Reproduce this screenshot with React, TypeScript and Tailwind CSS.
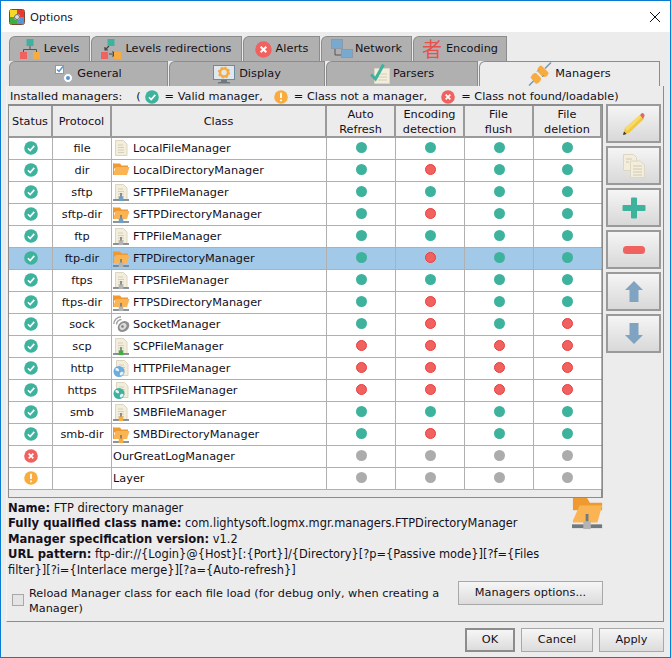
import type { ReactNode } from "react";

const TEAL = "#3db39e";
const RED = "#f0625f";
const ORANGE = "#f8ab3e";

type Dot = "g" | "r" | "n";
type Net = "blue" | "gray" | "green" | "orange";
type ClassIcon =
  | { kind: "file" }
  | { kind: "dir" }
  | { kind: "file-net"; net: Net }
  | { kind: "dir-net"; net: Net }
  | { kind: "sock" }
  | { kind: "globe"; color: string }
  | { kind: "none" };

type Row = {
  status: "ok" | "err" | "warn";
  protocol: string;
  name: string;
  icon: ClassIcon;
  caps: [Dot, Dot, Dot, Dot];
};

const ROWS: Row[] = [
  { status: "ok", protocol: "file", name: "LocalFileManager", icon: { kind: "file" }, caps: ["g", "g", "g", "g"] },
  { status: "ok", protocol: "dir", name: "LocalDirectoryManager", icon: { kind: "dir" }, caps: ["g", "r", "g", "g"] },
  { status: "ok", protocol: "sftp", name: "SFTPFileManager", icon: { kind: "file-net", net: "blue" }, caps: ["g", "g", "g", "g"] },
  { status: "ok", protocol: "sftp-dir", name: "SFTPDirectoryManager", icon: { kind: "dir-net", net: "blue" }, caps: ["g", "r", "g", "g"] },
  { status: "ok", protocol: "ftp", name: "FTPFileManager", icon: { kind: "file-net", net: "gray" }, caps: ["g", "g", "g", "g"] },
  { status: "ok", protocol: "ftp-dir", name: "FTPDirectoryManager", icon: { kind: "dir-net", net: "gray" }, caps: ["g", "r", "g", "g"] },
  { status: "ok", protocol: "ftps", name: "FTPSFileManager", icon: { kind: "file-net", net: "gray" }, caps: ["g", "g", "g", "g"] },
  { status: "ok", protocol: "ftps-dir", name: "FTPSDirectoryManager", icon: { kind: "dir-net", net: "gray" }, caps: ["g", "r", "g", "g"] },
  { status: "ok", protocol: "sock", name: "SocketManager", icon: { kind: "sock" }, caps: ["g", "r", "g", "r"] },
  { status: "ok", protocol: "scp", name: "SCPFileManager", icon: { kind: "file-net", net: "green" }, caps: ["r", "r", "r", "r"] },
  { status: "ok", protocol: "http", name: "HTTPFileManager", icon: { kind: "globe", color: "#6aaee0" }, caps: ["r", "r", "r", "r"] },
  { status: "ok", protocol: "https", name: "HTTPSFileManager", icon: { kind: "globe", color: TEAL }, caps: ["r", "r", "r", "r"] },
  { status: "ok", protocol: "smb", name: "SMBFileManager", icon: { kind: "file-net", net: "orange" }, caps: ["g", "g", "g", "g"] },
  { status: "ok", protocol: "smb-dir", name: "SMBDirectoryManager", icon: { kind: "dir-net", net: "orange" }, caps: ["g", "r", "g", "g"] },
  { status: "err", protocol: "", name: "OurGreatLogManager", icon: { kind: "none" }, caps: ["n", "n", "n", "n"] },
  { status: "warn", protocol: "", name: "Layer", icon: { kind: "none" }, caps: ["n", "n", "n", "n"] },
];

const URL_PATTERN =
  "ftp-dir://{Login}@{Host}[:{Port}]/{Directory}[?p={Passive mode}][?f={Files filter}][?i={Interlace merge}][?a={Auto-refresh}]";

const NET_COLORS: Record<Net, string> = {
  blue: "#6f9fc8",
  gray: "#b4b4b4",
  green: "#3fae3f",
  orange: "#f8ab3e",
};

function StatusIcon({ status, size = 14 }: { status: Row["status"]; size?: number }) {
  const fill = status === "ok" ? TEAL : status === "err" ? RED : ORANGE;
  return (
    <svg width={size} height={size} viewBox="0 0 15 15" className="shrink-0">
      <circle cx="7.5" cy="7.5" r="7.3" fill={fill} />
      {status === "ok" && <path d="M4.2 7.8 6.6 10.2 11 5.2" fill="none" stroke="#fff" strokeWidth="1.7" />}
      {status === "err" && <path d="M5 5l5 5M10 5l-5 5" fill="none" stroke="#fff" strokeWidth="1.8" />}
      {status === "warn" && <path d="M7.5 3v5.6M7.5 10.2v1.9" fill="none" stroke="#fff" strokeWidth="1.9" />}
    </svg>
  );
}

function FilePage() {
  return (
    <>
      <path d="M2.5.5h8l3.5 3.500v11.500h-11.500z" fill="#f3eddc" stroke="#dcd5c0" />
      <path d="M5 5h5M5 7.500h6M5 10h6M5 12.500h6" stroke="#d5ceb8" />
    </>
  );
}

function FolderShape() {
  return (
    <>
      <path d="M0 1.500h7l1.500 2H15v3H0z" fill="#ee9a31" />
      <path d="M0 13h14l2.500-8H3L0 12z" fill="#fbb454" />
      <path d="M0 1.500h1V13H0z" fill="#ee9a31" />
    </>
  );
}

function NetLine({ color }: { color: string }) {
  return (
    <>
      <path d="M0 16h16" stroke="#6f7a80" strokeWidth="1.600" />
      <rect x="7.200" y="9" width="1.600" height="4" fill="#6f7a80" />
      <rect x="5.700" y="12.500" width="4.600" height="4.600" fill={color} />
    </>
  );
}

function RowIcon({ icon }: { icon: ClassIcon }) {
  if (icon.kind === "none") return null;
  return (
    <svg width="17" height="18" viewBox="0 0 17 18" className="shrink-0">
      {(icon.kind === "file" || icon.kind === "file-net" || icon.kind === "globe") && (
        <g transform={icon.kind === "globe" ? "translate(1 0)" : "translate(0 0)"}>
          <FilePage />
        </g>
      )}
      {(icon.kind === "dir" || icon.kind === "dir-net") && <FolderShape />}
      {(icon.kind === "file-net" || icon.kind === "dir-net") && <NetLine color={NET_COLORS[icon.net]} />}
      {icon.kind === "globe" && (
        <>
          <circle cx="6" cy="11.500" r="5.500" fill={icon.color} />
          <path d="M2.500 8.500c2-1 3 0 3.500 1.500s-1 1.500-2 1-2-1-1.500-2.500zM7 13c1-1.500 3-1.500 3.500-.5s-1.500 3-2.500 3-1.500-1.500-1-2.500z" fill="#e9f3f6" />
        </>
      )}
      {icon.kind === "sock" && (
        <>
          <path d="M.8 8A7.500 7.500 0 0 1 8 .8M3.500 8.500A5 5 0 0 1 8.500 3.500" fill="none" stroke="#a0a0a0" strokeWidth="1.400" />
          <ellipse cx="10.500" cy="10.500" rx="6.200" ry="5" transform="rotate(-40 10.500 10.500)" fill="#8f8f8f" />
          <ellipse cx="10" cy="10.500" rx="3.800" ry="2.800" transform="rotate(-40 10 10.500)" fill="#dcdcdc" />
          <circle cx="9.500" cy="10.500" r="1.300" fill="#7c7c7c" />
        </>
      )}
    </svg>
  );
}

function LevelsIcon({ arrows }: { arrows?: boolean }) {
  return (
    <svg width="20" height="20" viewBox="0 0 20 20" className="shrink-0">
      {!arrows && <path d="M10 6v4.500M3.500 14v-3.500h13V14" fill="none" stroke="#555" strokeWidth="1" />}
      {arrows && <path d="M8 7 4 11M4 8v3h3M8 15h6M11.500 12.500 14 15l-2.500 2.500" fill="none" stroke="#444" strokeWidth="1.200" />}
      <rect x="6.500" y="0" width="7" height="7" fill={TEAL} />
      <rect x="0" y="13" width="7" height="7" fill={RED} />
      <rect x="13" y="13" width="7" height="7" fill={ORANGE} />
    </svg>
  );
}

function NetworkIcon() {
  return (
    <svg width="22" height="20" viewBox="0 0 22 20" className="shrink-0">
      <path d="M4 10v6h6" fill="none" stroke="#555" />
      <rect x="0.500" y="0.500" width="11" height="9" fill="#7aa9cf" stroke="#8d9aa5" />
      <rect x="10.500" y="10.500" width="11" height="8" fill="#7aa9cf" stroke="#8d9aa5" />
    </svg>
  );
}

function GeneralIcon() {
  return (
    <svg width="18" height="18" viewBox="0 0 18 18" className="shrink-0">
      <rect x="0.500" y="0.500" width="8" height="8" fill="#fff" stroke="#8a9aa8" />
      <path d="M2 4.500 4 6.500 8 1.500" fill="none" stroke="#5a93c8" strokeWidth="1.500" />
      <circle cx="13" cy="13" r="4.500" fill="#fff" stroke="#a8b0b8" />
      <circle cx="13" cy="13" r="2" fill="#5a93c8" />
    </svg>
  );
}

function DisplayIcon() {
  return (
    <svg width="22" height="19" viewBox="0 0 22 19" className="shrink-0">
      <rect x="0.500" y="0.500" width="21" height="14" fill="#dfe8ee" stroke="#6f8a9c" />
      <rect x="8" y="15" width="6" height="2" fill="#6f7a80" />
      <rect x="5" y="17" width="12" height="1.500" fill="#6f7a80" />
      <circle cx="11" cy="7.500" r="4" fill="none" stroke={ORANGE} strokeWidth="2.500" />
      <circle cx="11" cy="7.500" r="5.200" fill="none" stroke={ORANGE} strokeWidth="1.800" strokeDasharray="2 2.080" />
    </svg>
  );
}

function ParsersIcon() {
  return (
    <svg width="20" height="20" viewBox="0 0 20 20" className="shrink-0">
      <path d="M4.500 4.500h15v15h-15z" fill="#f3eddc" stroke="#dcd5c0" />
      <path d="M8 10h9M8 13h9M8 16h9" stroke="#d5ceb8" />
      <path d="M1 10.500 5.500 15 13.500.5" fill="none" stroke={TEAL} strokeWidth="3" />
    </svg>
  );
}

function PlugIcon() {
  return (
    <svg width="24" height="24" viewBox="0 0 24 24" className="shrink-0">
      <path d="M23 .5 17 6.500M1 23.500 7 17.500" stroke="#7a98b0" strokeWidth="1.500" />
      <path d="M13.500 3.500 20.500 10.500c0 3-2 5-6 4.500L9.500 9.500c-.5-3 1.500-6 4-6z" fill={ORANGE} />
      <path d="M2.500 15.500c1.500-3 3.500-5 5.500-4.500l5 5c.5 2.500-2 5-5 6z" fill={ORANGE} />
      <path d="M9 9.500l2-2M14 15l2-2" stroke="#8a9aa5" />
    </svg>
  );
}

function Tab({ width, icon, label, active, gap = 4 }: { width: string; icon: ReactNode; label: string; active?: boolean; gap?: number }) {
  return (
    <div
      className={`${width} ${active ? "bg-[#ececec]" : "bg-[#b0b0b0]"} h-[25px] shrink-0 rounded-tl-[6px] border-t border-r border-l border-[#8c8c8c] flex items-center justify-center`}
      style={{ gap }}
    >
      {icon}
      <span>{label}</span>
    </div>
  );
}

function CapDot({ value }: { value: Dot }) {
  const color = value === "g" ? "bg-[#3db39e]" : value === "r" ? "bg-[#f0625f] border border-[#ee3b3b]" : "bg-[#acacac]";
  return <span className={`block w-[11px] h-[11px] rounded-full ${color}`} />;
}

function HeadCell({ width, children }: { width: string; children: ReactNode }) {
  return (
    <div className={`${width} shrink-0 h-full pt-[1px] flex items-center justify-center text-center leading-[15px] border-r-2 border-b-2 border-[#9a9a9a] bg-[#ececec]`}>
      {children}
    </div>
  );
}

function TableRow({ row, selected }: { row: Row; selected: boolean }) {
  const bg = selected ? "bg-[#a3c9e9]" : "bg-white";
  const cell = "shrink-0 h-full flex items-center border-r border-[#b0b0b0]";
  return (
    <div className={`flex h-[22px] border-b border-[#b0b0b0] ${bg}`}>
      <div className={`${cell} w-[44px] justify-center pb-[2px]`}>
        <StatusIcon status={row.status} />
      </div>
      <div className={`${cell} w-[59px] justify-center`}>{row.protocol}</div>
      <div className={`${cell} w-[215px] pl-[1px] gap-[3px]`}>
        <RowIcon icon={row.icon} />
        <span>{row.name}</span>
      </div>
      {row.caps.map((cap, i) => (
        <div key={i} className={`${cell} ${i === 3 ? "w-[68px]" : "w-[69px]"} justify-center pb-[2px]`}>
          <CapDot value={cap} />
        </div>
      ))}
    </div>
  );
}

function SideButton({ children }: { children: ReactNode }) {
  return (
    <button
      type="button"
      className="w-[55px] h-[39px] border-2 border-[#9a9a9a] bg-gradient-to-b from-[#f5f5f5] to-[#d8d8d8] flex items-center justify-center"
    >
      {children}
    </button>
  );
}

const App = () => {
  return (
    <div className="w-[671px] h-[658px] flex flex-col border border-[#0a7bd0] bg-[#ececec] text-[11.3px] leading-[14px] text-[#14101a] font-['DejaVu_Sans',sans-serif] overflow-hidden">
      {/* タイトルバー */}
      <div className="h-[31px] shrink-0 bg-white flex items-center pl-[8px] pr-[9px]">
        <svg width="16" height="16" viewBox="0 0 16 16" className="shrink-0">
          <rect x="0.500" y="0.500" width="15" height="15" rx="2" fill="#fff" stroke="#7a4a30" />
          <path d="M1 1h7v4a3 3 0 0 0-3 3H1z" fill="#f5d922" />
          <path d="M8 1h7v7h-4a3 3 0 0 0-3-3z" fill="#e83a30" />
          <path d="M1 8h4a3 3 0 0 0 3 3v4H1z" fill="#3fae3f" />
          <path d="M8 11a3 3 0 0 0 3-3h4v7H8z" fill="#5a93d8" />
          <circle cx="8" cy="8" r="2.500" fill="#ddd" stroke="#666" />
        </svg>
        <span className="ml-[5px] text-[11.5px] font-['Noto_Sans',sans-serif]">Options</span>
        <svg width="12" height="12" viewBox="0 0 12 12" className="ml-auto">
          <path d="M1 1l10 10M11 1 1 11" stroke="#111" strokeWidth="1" />
        </svg>
      </div>

      <div className="flex-1 px-[5px] pt-[4px] flex flex-col min-h-0">
        {/* タブ */}
        <div className="flex pl-[3px] gap-[1px]">
          <Tab width="w-[81px]" icon={<LevelsIcon />} label="Levels" />
          <Tab width="w-[151px]" icon={<LevelsIcon arrows />} label="Levels redirections" />
          <Tab width="w-[77px]" icon={<StatusIcon status="err" size={17} />} label="Alerts" />
          <Tab width="w-[91px]" icon={<NetworkIcon />} label="Network" gap={2} />
          <Tab
            width="w-[94px]"
            icon={<span className="text-[20px] leading-[20px] text-[#e8504c] font-['Noto_Sans_CJK_JP',sans-serif]">者</span>}
            label="Encoding"
          />
        </div>
        <div className="flex pl-[3px] gap-[1px]">
          <Tab width="w-[159px]" icon={<GeneralIcon />} label="General" />
          <Tab width="w-[156px]" icon={<DisplayIcon />} label="Display" />
          <Tab width="w-[152px]" icon={<ParsersIcon />} label="Parsers" gap={3} />
          <Tab width="w-[181px]" icon={<PlugIcon />} label="Managers" gap={3} active />
        </div>

        {/* パネル */}
        <div className="w-[658px] h-[536px] shrink-0 border-r border-b border-[#8c8c8c] border-l border-l-[#f5f5f5] pl-[1px] pr-[2px] flex flex-col">
          <div className="h-[18px] shrink-0 flex items-center pl-[2px] pt-[3px] whitespace-pre">
            <span>Installed managers:</span>
            <span className="ml-[14px] mr-[4px]">(</span>
            <StatusIcon status="ok" />
            <span className="ml-[6px]">= Valid manager,</span>
            <span className="w-[11px]" />
            <StatusIcon status="warn" />
            <span className="ml-[6px]">= Class not a manager,</span>
            <span className="w-[14px]" />
            <StatusIcon status="err" />
            <span className="ml-[6px]">= Class not found/loadable)</span>
          </div>

          <div className="flex gap-[3px]">
            {/* 表 */}
            <div className="w-[595px] h-[394px] shrink-0 border-t-2 border-l border-r-2 border-b border-[#8c8c8c] bg-[#ececec]">
              <div className="flex h-[32px]">
                <HeadCell width="w-[44px]">Status</HeadCell>
                <HeadCell width="w-[59px]">Protocol</HeadCell>
                <HeadCell width="w-[215px]">Class</HeadCell>
                <HeadCell width="w-[69px]">Auto<br />Refresh</HeadCell>
                <HeadCell width="w-[69px]">Encoding<br />detection</HeadCell>
                <HeadCell width="w-[69px]">File<br />flush</HeadCell>
                <HeadCell width="w-[68px]">File<br />deletion</HeadCell>
              </div>
              {ROWS.map((row) => (
                <TableRow key={row.protocol + row.name} row={row} selected={row.protocol === "ftp-dir"} />
              ))}
            </div>

            {/* 右側のボタン */}
            <div className="flex flex-col gap-[3px]">
              <SideButton>
                <svg width="24" height="24" viewBox="0 0 24 24">
                  <path d="M1 23 3 16 18 3l4 4L7 21z" fill="#f2c93e" />
                  <path d="M3 16 18 3l2 2L5 19z" fill="#f7da6a" />
                  <path d="M1 23l1-3.500L4.500 22z" fill="#333" />
                  <path d="M18 3l2-2c1-.5 3 1.500 2.500 3L21 7z" fill="#dd6a60" />
                </svg>
              </SideButton>
              <SideButton>
                <svg width="22" height="24" viewBox="0 0 22 24">
                  <path d="M.5.5h10l3 3v13H.5z" fill="#f3eddc" stroke="#ddd6c2" />
                  <path d="M7.500 7h10l4 4v12.500h-14z" fill="#f3eddc" stroke="#ddd6c2" />
                  <path d="M3 5h6M3 8h3M10 12h9M10 15h9M10 18h9M10 21h9" stroke="#cfc8b2" />
                </svg>
              </SideButton>
              <SideButton>
                <svg width="24" height="22" viewBox="0 0 24 22">
                  <path d="M9 1.500a1 1 0 0 1 1-1h4a1 1 0 0 1 1 1V8h7.500a1 1 0 0 1 1 1v4a1 1 0 0 1-1 1H15v6.500a1 1 0 0 1-1 1h-4a1 1 0 0 1-1-1V14H1.500a1 1 0 0 1-1-1V9a1 1 0 0 1 1-1H9z" fill={TEAL} />
                </svg>
              </SideButton>
              <SideButton>
                <svg width="22" height="8" viewBox="0 0 22 8">
                  <rect width="22" height="8" rx="3.500" fill={RED} />
                </svg>
              </SideButton>
              <SideButton>
                <svg width="18" height="21" viewBox="0 0 18 21">
                  <path d="M9 0 18 9h-4.500v12h-9V9H0z" fill="#7fa3c0" />
                </svg>
              </SideButton>
              <SideButton>
                <svg width="18" height="21" viewBox="0 0 18 21">
                  <path d="M9 21 18 12h-4.500V0h-9v12H0z" fill="#7fa3c0" />
                </svg>
              </SideButton>
            </div>
          </div>

          {/* 詳細 */}
          <div className="w-[596px] h-[83px] shrink-0 flex">
            <div className="w-[564px] shrink-0 pt-[3px] text-[11.4px] leading-[15.4px] [&_b]:text-[11.6px]">
              <div><b>Name:</b> FTP directory manager</div>
              <div><b>Fully qualified class name:</b> com.lightysoft.logmx.mgr.managers.FTPDirectoryManager</div>
              <div><b>Manager specification version:</b> v1.2</div>
              <div><b>URL pattern:</b> {URL_PATTERN}</div>
            </div>
            <svg width="32" height="32" viewBox="0 0 34 34" className="shrink-0">
              <path d="M1 0h15l3 5h13v8H1z" fill="#ee9a31" />
              <path d="M1 26h26l5-18H8L1 24z" fill="#fbb454" />
              <rect x="0" y="28" width="32" height="4" fill="#6f7a80" />
              <rect x="14.500" y="17" width="3" height="8" fill="#6f7a80" />
              <rect x="12" y="25" width="8" height="8" fill="#b4b4b4" />
            </svg>
          </div>

          <div className="flex items-start pl-[4px]">
            <span className="w-[12px] h-[12px] mt-[13px] shrink-0 border border-[#a8a8a8] bg-[#e4e4e4]" />
            <p className="w-[424px] ml-[5px] mt-[5px] leading-[15px]">
              Reload Manager class for each file load (for debug only, when creating a Manager)
            </p>
            <button
              type="button"
              className="ml-[5px] w-[145px] h-[24px] border border-[#a8a8a8] bg-gradient-to-b from-[#f6f6f6] to-[#dcdcdc]"
            >
              Managers options...
            </button>
          </div>
        </div>

        {/* フッター */}
        <div className="flex justify-end gap-[6px] pt-[6px] pr-[1px]">
          <button type="button" className="w-[50px] h-[24px] border-2 border-[#8c8c8c] bg-gradient-to-b from-[#f6f6f6] to-[#dcdcdc]">
            OK
          </button>
          <button type="button" className="w-[72px] h-[24px] border border-[#a8a8a8] bg-gradient-to-b from-[#f6f6f6] to-[#dcdcdc]">
            Cancel
          </button>
          <button type="button" className="w-[65px] h-[24px] border border-[#a8a8a8] bg-gradient-to-b from-[#f6f6f6] to-[#dcdcdc]">
            Apply
          </button>
        </div>
      </div>
    </div>
  );
};

export default App;
